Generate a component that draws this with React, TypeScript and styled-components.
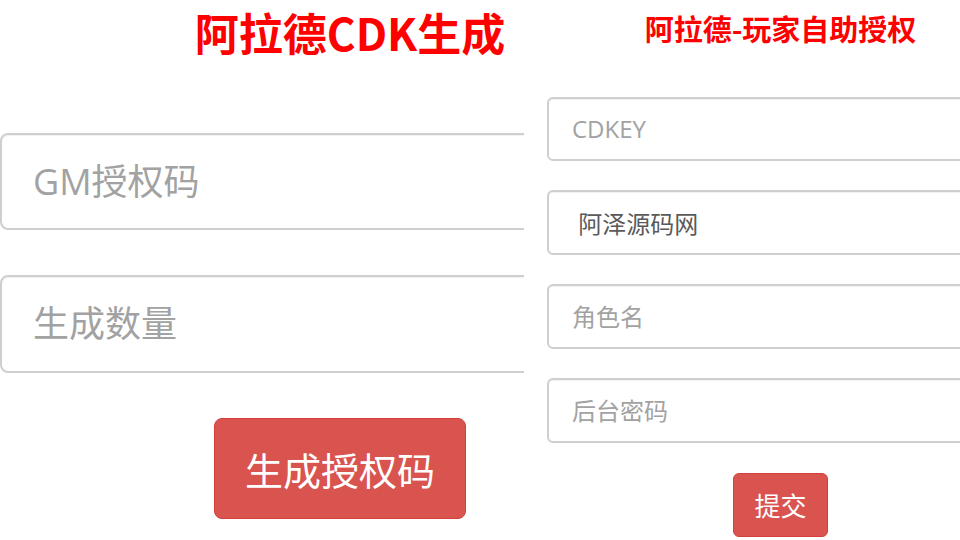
import React from 'react';
import styled, { createGlobalStyle } from 'styled-components';

const GlobalStyle = createGlobalStyle`
  html, body {
    margin: 0;
    padding: 0;
    background: #fff;
  }
  body {
    width: 960px;
    height: 540px;
    overflow: hidden;
    font-family: "Open Sans", "Noto Sans CJK SC", sans-serif;
  }
`;

const Page = styled.div`
  display: flex;
  width: 960px;
  height: 540px;
  overflow: hidden;
`;

const Panel = styled.section<{ $width: number }>`
  width: ${(p) => p.$width}px;
  flex-shrink: 0;
  height: 540px;
  overflow: hidden;
  background: #fff;
`;

const Inner = styled.div<{ $width: number; $pad: number }>`
  width: ${(p) => p.$width}px;
  padding: 0 ${(p) => p.$pad}px;
  box-sizing: border-box;
  display: flex;
  flex-direction: column;
`;

const Title = styled.h1<{ $size: number; $top: number }>`
  margin: ${(p) => p.$top}px 0 0;
  text-align: center;
  color: #ff0000;
  font-family: "Noto Sans CJK SC", "Open Sans", sans-serif;
  font-weight: 700;
  font-size: ${(p) => p.$size}px;
  line-height: 1.2;
`;

const Form = styled.form<{ $top: number; $gap: number }>`
  margin-top: ${(p) => p.$top}px;
  display: flex;
  flex-direction: column;
  gap: ${(p) => p.$gap}px;
`;

const Field = styled.input<{ $height: number; $size: number; $radius: number; $pad: number }>`
  display: block;
  width: 100%;
  box-sizing: border-box;
  height: ${(p) => p.$height}px;
  padding: 0 ${(p) => p.$pad}px;
  border: 2px solid #cfcfcf;
  border-radius: ${(p) => p.$radius}px;
  box-shadow: inset 0 1px 1px rgba(0, 0, 0, 0.06);
  background: #fff;
  color: #5a5a5a;
  font-family: "Open Sans", "Noto Sans CJK SC", sans-serif;
  font-size: ${(p) => p.$size}px;
  outline: none;

  &::placeholder {
    color: #a2a2a2;
  }
`;

const ButtonRow = styled.div<{ $top: number; $align: string; $indent: number }>`
  display: flex;
  justify-content: ${(p) => p.$align};
  padding-left: ${(p) => p.$indent}px;
  margin-top: ${(p) => p.$top}px;
`;

const DangerButton = styled.button<{ $w: number; $h: number; $size: number; $radius: number }>`
  width: ${(p) => p.$w}px;
  height: ${(p) => p.$h}px;
  padding: 0;
  border: 1px solid #d43f3a;
  border-radius: ${(p) => p.$radius}px;
  background: #d9534f;
  color: #fff;
  font-family: "Noto Sans CJK SC", "Open Sans", sans-serif;
  font-size: ${(p) => p.$size}px;
  cursor: pointer;
`;

export default function App() {
  return (
    <>
      <GlobalStyle />
      <Page>
        <Panel $width={524}>
          <Inner $width={700} $pad={0}>
            <Title $size={44} $top={6}>阿拉德CDK生成</Title>
            <Form $top={74} $gap={45} onSubmit={(e) => e.preventDefault()}>
              <Field $height={97} $size={36} $radius={8} $pad={31} placeholder="GM授权码" />
              <Field $height={98} $size={36} $radius={8} $pad={31} placeholder="生成数量" />
            </Form>
            <ButtonRow $top={45} $align="flex-start" $indent={214}>
              <DangerButton $w={252} $h={101} $size={38} $radius={8}>生成授权码</DangerButton>
            </ButtonRow>
          </Inner>
        </Panel>
        <Panel $width={436}>
          <Inner $width={513} $pad={23}>
            <Title $size={29} $top={11}>阿拉德-玩家自助授权</Title>
            <Form $top={51} $gap={29} onSubmit={(e) => e.preventDefault()}>
              <Field $height={64} $size={24} $radius={6} $pad={23} placeholder="CDKEY" />
              <Field $height={65} $size={24} $radius={6} $pad={23} defaultValue=" 阿泽源码网" />
              <Field $height={65} $size={24} $radius={6} $pad={23} placeholder="角色名" />
              <Field $height={65} $size={24} $radius={6} $pad={23} placeholder="后台密码" />
            </Form>
            <ButtonRow $top={30} $align="center" $indent={0}>
              <DangerButton $w={95} $h={64} $size={26} $radius={6}>提交</DangerButton>
            </ButtonRow>
          </Inner>
        </Panel>
      </Page>
    </>
  );
}
